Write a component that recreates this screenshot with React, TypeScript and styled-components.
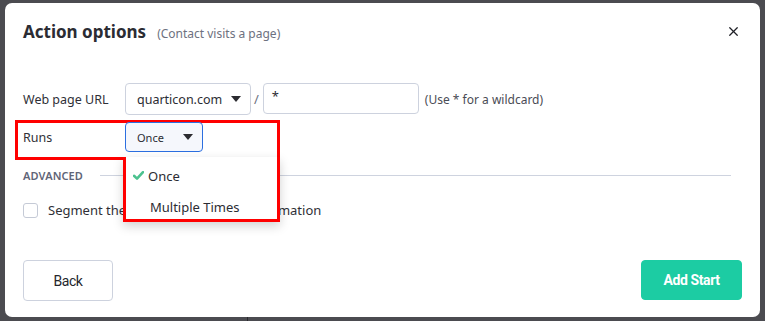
import React from 'react'
import styled, { createGlobalStyle } from 'styled-components'
import { X } from 'lucide-react'

const GlobalStyle = createGlobalStyle`
    html, body {
        margin: 0;
        padding: 0;
        background: #4b4b50;
    }
    body {
        font-family: "Noto Sans", "Open Sans", Arial, sans-serif;
        color: #2f3037;
    }
`

type SelectProps = {
    value: string
    width: number
    active?: boolean
}

const Caret = () => (
    <svg width="10" height="6" viewBox="0 0 10 6">
        <path d="M0 0 L10 0 L5 6 Z" fill="#2b2b30" />
    </svg>
)

const Select = ({ value, width, active }: SelectProps) => (
    <SelectBox $width={width} $active={active}>
        <span>{value}</span>
        <Caret />
    </SelectBox>
)

const Check = () => (
    <svg width="11" height="9" viewBox="0 0 11 9">
        <path d="M1 4.8 L4 7.6 L10 1.2" fill="none" stroke="#4cc28f" strokeWidth="2.6" strokeLinecap="round" strokeLinejoin="round" />
    </svg>
)

const App = () => {
    return (
        <>
            <GlobalStyle />
            <Backdrop>
                <Modal>
                    <Header>
                        <Title>Action options</Title>
                        <Subtitle>(Contact visits a page)</Subtitle>
                        <Close>
                            <X size={15} strokeWidth={2} color="#1f2026" />
                        </Close>
                    </Header>

                    <Form>
                        <Row>
                            <Label>Web page URL</Label>
                            <Select value="quarticon.com" width={126} />
                            <Slash>/</Slash>
                            <Input>*</Input>
                            <Hint>(Use * for a wildcard)</Hint>
                        </Row>
                        <Row $small>
                            <Highlight />
                            <Label>Runs</Label>
                            <SelectWrap>
                                <Select value="Once" width={78} active />
                                <Menu>
                                    <MenuItem>
                                        <Check />
                                        Once
                                    </MenuItem>
                                    <MenuItem $indent>Multiple Times</MenuItem>
                                </Menu>
                            </SelectWrap>
                        </Row>
                    </Form>

                    <Section>
                        <SectionTitle>ADVANCED</SectionTitle>
                        <Rule />
                    </Section>

                    <CheckRow>
                        <Checkbox />
                        <span>Segment the contacts using visit information</span>
                    </CheckRow>

                    <Footer>
                        <Button>Back</Button>
                        <Button $primary>Add Start</Button>
                    </Footer>
                </Modal>
                <Seam />
            </Backdrop>
        </>
    )
}

const Backdrop = styled.div`
    position: relative;
    width: 765px;
    height: 321px;
    padding: 3px 5px 4px 5px;
    box-sizing: border-box;
    overflow: hidden;
`
const Seam = styled.div`
    position: absolute;
    left: 247px;
    bottom: 0;
    width: 1px;
    height: 4px;
    background: #2a2a2e;
`
const Modal = styled.div`
    height: 314px;
    background: #fff;
    border-radius: 7px;
    padding: 0 18px;
    box-sizing: border-box;
    display: flex;
    flex-direction: column;
`
const Header = styled.div`
    display: flex;
    align-items: baseline;
    padding-top: 17px;
    height: 28px;
`
const Title = styled.h2`
    margin: 0;
    font-size: 17px;
    font-weight: 700;
    color: #2b2c33;
`
const Subtitle = styled.span`
    margin-left: 11px;
    font-size: 12px;
    color: #6d7180;
`
const Close = styled.div`
    margin-left: auto;
    margin-right: 1px;
    align-self: center;
    display: flex;
    margin-top: -6px;
`
const Form = styled.div`
    margin-top: 35px;
    display: flex;
    flex-direction: column;
    gap: 7px;
`
const Row = styled.div<{ $small?: boolean }>`
    position: relative;
    display: flex;
    align-items: center;
    height: ${p => (p.$small ? 30 : 32)}px;
`
const Highlight = styled.div`
    position: absolute;
    left: -8px;
    top: -2px;
    width: 259px;
    height: 34px;
    border: 3px solid #ff0000;
`
const Label = styled.div`
    position: relative;
    width: 102px;
    font-size: 12.5px;
    color: #2f3037;
`
const SelectWrap = styled.div`
    position: relative;
`
const SelectBox = styled.div<{ $width: number; $active?: boolean }>`
    width: ${p => p.$width}px;
    box-sizing: border-box;
    height: ${p => (p.$active ? 30 : 32)}px;
    display: flex;
    align-items: center;
    justify-content: space-between;
    padding: 0 9px 0 11px;
    border: 1px solid ${p => (p.$active ? '#2c6fe0' : '#cdd2de')};
    border-radius: 4px;
    background: ${p => (p.$active ? '#f5f7fc' : '#fff')};
    font-size: ${p => (p.$active ? 11 : 12.5)}px;
    color: #2b2c33;
`
const Menu = styled.div`
    position: absolute;
    top: 35px;
    left: -2px;
    width: 157px;
    height: 65px;
    box-sizing: border-box;
    background: #fff;
    border: 3px solid #ff0000;
    border-top: none;
    padding-top: 3px;
    box-shadow: 0 4px 10px rgba(0, 0, 0, 0.18);
    z-index: 2;
`
const MenuItem = styled.div<{ $indent?: boolean }>`
    display: flex;
    align-items: center;
    gap: 4px;
    height: 31px;
    padding-left: ${p => (p.$indent ? 24 : 7)}px;
    font-size: 13px;
    color: #2b2c33;
`
const Slash = styled.span`
    margin: 0 4px 0 3px;
    font-size: 13px;
    color: #6d7180;
`
const Input = styled.div`
    width: 156px;
    height: 31px;
    box-sizing: border-box;
    border: 1px solid #cdd2de;
    border-radius: 4px;
    padding: 3px 8px;
    font-size: 13px;
    color: #2b2c33;
    align-self: flex-start;
`
const Hint = styled.span`
    margin-left: 6px;
    font-size: 12px;
    color: #4a4c55;
`
const Section = styled.div`
    display: flex;
    align-items: center;
    margin-top: 15px;
    height: 16px;
`
const SectionTitle = styled.span`
    font-size: 11px;
    font-weight: 600;
    color: #5f6577;
    letter-spacing: 0.1px;
`
const Rule = styled.div`
    flex: 1;
    height: 1px;
    background: #ced3df;
    margin: 0 11px 0 17px;
`
const CheckRow = styled.div`
    display: flex;
    align-items: center;
    gap: 10px;
    margin-top: 18px;
    font-size: 13px;
    color: #2f3037;
`
const Checkbox = styled.div`
    width: 15px;
    height: 15px;
    box-sizing: border-box;
    border: 1px solid #c5cad6;
    border-radius: 3px;
`
const Footer = styled.div`
    display: flex;
    justify-content: space-between;
    margin-top: auto;
    margin-bottom: 16px;
`
const Button = styled.button<{ $primary?: boolean }>`
    height: ${p => (p.$primary ? 40 : 41)}px;
    width: ${p => (p.$primary ? 101 : 90)}px;
    border-radius: 4px;
    border: 1px solid ${p => (p.$primary ? '#1ccca3' : '#cdd2de')};
    background: ${p => (p.$primary ? '#1ccca3' : '#fff')};
    color: ${p => (p.$primary ? '#fff' : '#25262c')};
    font-family: Roboto, "Liberation Sans", sans-serif;
    font-size: 14px;
    font-weight: ${p => (p.$primary ? 700 : 400)};
    letter-spacing: -0.4px;
`

export default App
